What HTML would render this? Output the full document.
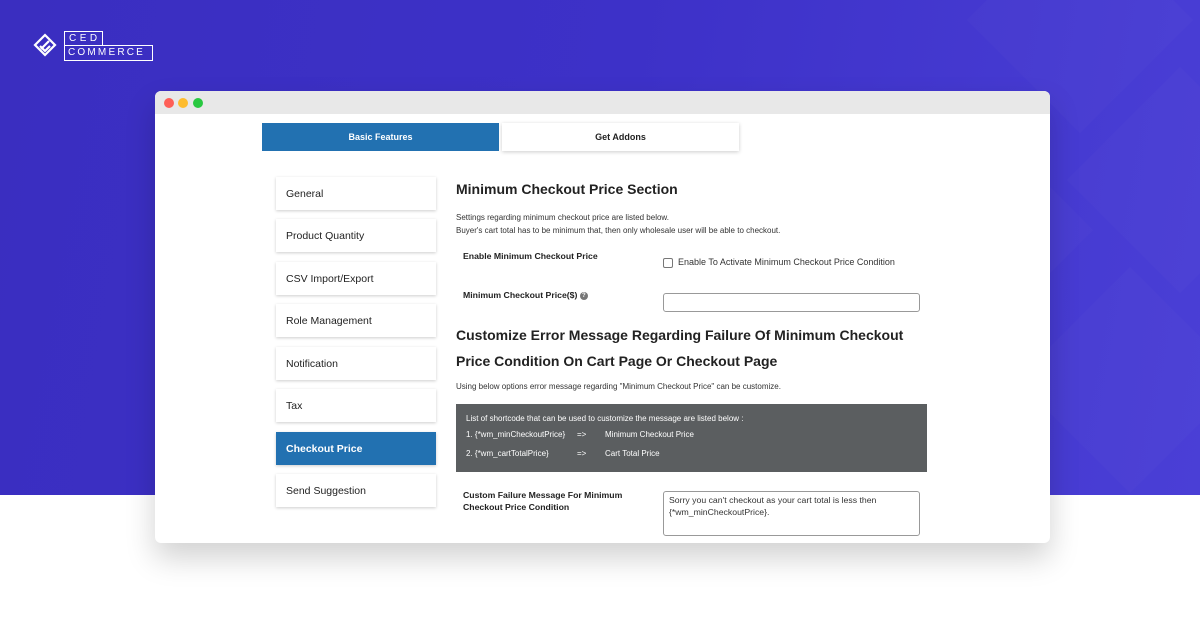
<!DOCTYPE html><html><head><style>
*{margin:0;padding:0;box-sizing:border-box}
body{width:1200px;height:628px;position:relative;overflow:hidden;background:#fff;font-family:"Liberation Sans",sans-serif}
.bg{position:absolute;left:0;top:0;width:1200px;height:495px;background:linear-gradient(100deg,#3a2ec0 0%,#3d31c8 50%,#4a3fd6 100%);overflow:hidden}
.dia{position:absolute;width:160px;height:160px;transform:rotate(45deg);background:rgba(255,255,255,0.02)}
.win{position:absolute;left:155px;top:91px;width:895px;height:452px;background:#fff;border-radius:6px;box-shadow:0 15px 30px rgba(0,0,0,0.18);overflow:hidden}
.tb{height:23px;background:#e8e8e8;position:relative}
.dot{position:absolute;top:7px;width:10px;height:10px;border-radius:50%}
.tab{position:absolute;top:32px;height:28px;font-size:9px;font-weight:bold;display:flex;align-items:center;justify-content:center}
.side{position:absolute;left:121px;width:160px;height:33px;background:#fff;box-shadow:0 1px 3px rgba(0,0,0,0.2);font-size:10.5px;color:#222;padding-left:10px;display:flex;align-items:center}
.a{position:absolute;color:#222}
</style></head><body>
<div class="bg">
<div class="dia" style="left:1000px;top:-60px"></div>
<div class="dia" style="left:1100px;top:100px"></div>
<div class="dia" style="left:1050px;top:300px"></div>
<div class="dia" style="left:900px;top:150px"></div>
</div>
<svg style="position:absolute;left:32px;top:33px" width="26" height="28" viewBox="0 0 26 28"><path d="M13 2 L23 12 L13 22 L3 12 Z M13 2 L8 7 M9 16 L17 8" fill="none" stroke="#fff" stroke-width="2.2"/><path d="M8 13 L13 18 L18 13" fill="none" stroke="#fff" stroke-width="2.2"/></svg>
<div style="position:absolute;left:64px;top:31px;width:39px;height:14px;border:1px solid #fff;border-bottom:none;color:#fff;font-size:10px;letter-spacing:3.5px;padding-left:4px;line-height:14px">CED</div>
<div style="position:absolute;left:64px;top:45px;width:89px;height:16px;border:1px solid #fff;color:#fff;font-size:10px;letter-spacing:2.2px;padding-left:3px;line-height:14px">COMMERCE</div>
<div class="win">
<div class="tb"><div class="dot" style="left:9px;background:#fe5f57"></div><div class="dot" style="left:23px;background:#febc2e"></div><div class="dot" style="left:38px;background:#28c840"></div></div>
<div class="tab" style="left:107px;width:237px;background:#2271b1;color:#fff">Basic Features</div>
<div class="tab" style="left:347px;width:237px;background:#fff;color:#222;box-shadow:0 1px 4px rgba(0,0,0,0.2)">Get Addons</div>
<div class="side" style="top:86px">General</div>
<div class="side" style="top:128px">Product Quantity</div>
<div class="side" style="top:171px">CSV Import/Export</div>
<div class="side" style="top:213px">Role Management</div>
<div class="side" style="top:256px">Notification</div>
<div class="side" style="top:298px">Tax</div>
<div class="side" style="top:341px;background:#2271b1;color:#fff;font-weight:bold">Checkout Price</div>
<div class="side" style="top:383px">Send Suggestion</div>
<div class="a" style="left:301px;top:90px;font-size:14px;font-weight:bold">Minimum Checkout Price Section</div>
<div class="a" style="left:301px;top:120px;font-size:8px;line-height:13px;color:#333">Settings regarding minimum checkout price are listed below.<br>Buyer's cart total has to be minimum that, then only wholesale user will be able to checkout.</div>
<div class="a" style="left:308px;top:160px;font-size:8.7px;font-weight:bold">Enable Minimum Checkout Price</div>
<div class="a" style="left:508px;top:167px;width:10px;height:10px;border:1px solid #777;border-radius:2px"></div>
<div class="a" style="left:523px;top:166px;font-size:9px;color:#333">Enable To Activate Minimum Checkout Price Condition</div>
<div class="a" style="left:308px;top:199px;font-size:8.7px;font-weight:bold">Minimum Checkout Price($) <span style="display:inline-block;width:8px;height:8px;border-radius:50%;background:#777;color:#fff;font-size:6px;text-align:center;line-height:8px;vertical-align:middle">?</span></div>
<div class="a" style="left:508px;top:202px;width:257px;height:19px;border:1px solid #999;border-radius:3px"></div>
<div class="a" style="left:301px;top:231px;font-size:14px;font-weight:bold;line-height:26px">Customize Error Message Regarding Failure Of Minimum Checkout<br>Price Condition On Cart Page Or Checkout Page</div>
<div class="a" style="left:301px;top:291px;font-size:8px;color:#333">Using below options error message regarding "Minimum Checkout Price" can be customize.</div>
<div class="a" style="left:301px;top:313px;width:471px;height:68px;background:#5b5e60;color:#fff;font-size:8px">
<div style="position:absolute;left:10px;top:10px">List of shortcode that can be used to customize the message are listed below :</div>
<div style="position:absolute;left:10px;top:26px">1. {*wm_minCheckoutPrice}</div><div style="position:absolute;left:121px;top:26px">=&gt;</div><div style="position:absolute;left:149px;top:26px">Minimum Checkout Price</div>
<div style="position:absolute;left:10px;top:45px">2. {*wm_cartTotalPrice}</div><div style="position:absolute;left:121px;top:45px">=&gt;</div><div style="position:absolute;left:149px;top:45px">Cart Total Price</div>
</div>
<div class="a" style="left:308px;top:398px;font-size:8.7px;font-weight:bold;line-height:12px">Custom Failure Message For Minimum<br>Checkout Price Condition</div>
<div class="a" style="left:508px;top:400px;width:257px;height:45px;border:1px solid #999;border-radius:3px;font-size:8.7px;color:#333;padding:2px 5px;line-height:12px">Sorry you can't checkout as your cart total is less then {*wm_minCheckoutPrice}.</div>
</div>
</body></html>
